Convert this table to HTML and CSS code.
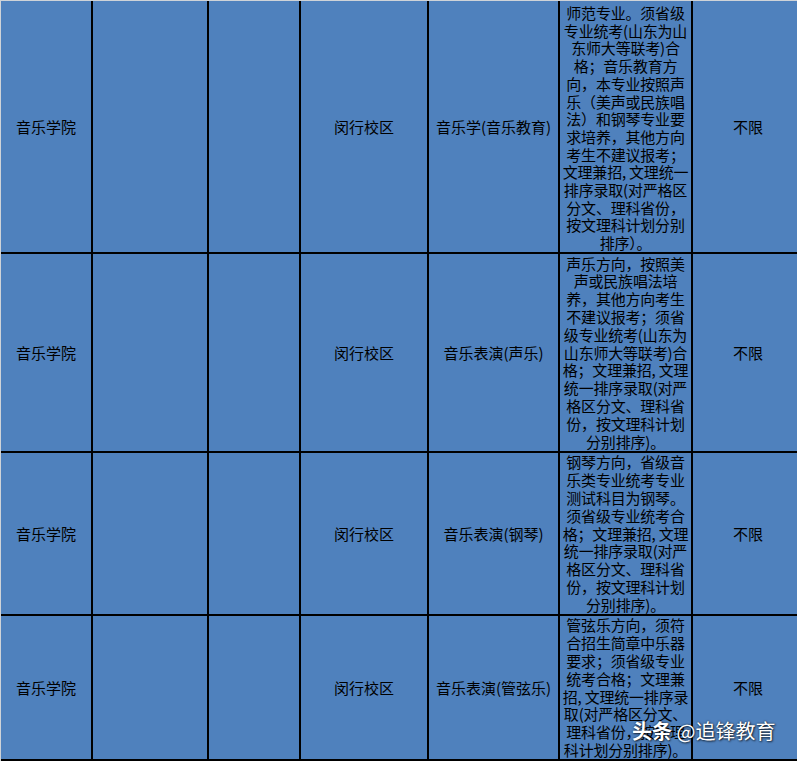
FILE: index.html
```html
<!DOCTYPE html>
<html lang="zh-CN">
<head>
<meta charset="utf-8">
<title>音乐学院招生计划</title>
<link rel="stylesheet" href="styles.css">
</head>
<body>
<div class="page">
  <div class="sheet">
    <div class="cell">音乐学院</div>
    <div class="cell"></div>
    <div class="cell"></div>
    <div class="cell">闵行校区</div>
    <div class="cell">音乐学(音乐教育)</div>
    <div class="cell note clipped">师范专业。须省级<br>专业统考(山东为山<br>东师大等联考)合<br>格；音乐教育方<br>向，本专业按照声<br>乐（美声或民族唱<br>法）和钢琴专业要<br>求培养，其他方向<br>考生不建议报考；<br>文理兼招, 文理统一<br>排序录取(对严格区<br>分文、理科省份，<br>按文理科计划分别<br>排序）。</div>
    <div class="cell">不限</div>

    <div class="cell">音乐学院</div>
    <div class="cell"></div>
    <div class="cell"></div>
    <div class="cell">闵行校区</div>
    <div class="cell">音乐表演(声乐)</div>
    <div class="cell note">声乐方向，按照美<br>声或民族唱法培<br>养，其他方向考生<br>不建议报考；须省<br>级专业统考(山东为<br>山东师大等联考)合<br>格；文理兼招, 文理<br>统一排序录取(对严<br>格区分文、理科省<br>份，按文理科计划<br>分别排序)。</div>
    <div class="cell">不限</div>

    <div class="cell">音乐学院</div>
    <div class="cell"></div>
    <div class="cell"></div>
    <div class="cell">闵行校区</div>
    <div class="cell">音乐表演(钢琴)</div>
    <div class="cell note">钢琴方向，省级音<br>乐类专业统考专业<br>测试科目为钢琴。<br>须省级专业统考合<br>格；文理兼招, 文理<br>统一排序录取(对严<br>格区分文、理科省<br>份，按文理科计划<br>分别排序)。</div>
    <div class="cell">不限</div>

    <div class="cell">音乐学院</div>
    <div class="cell"></div>
    <div class="cell"></div>
    <div class="cell">闵行校区</div>
    <div class="cell">音乐表演(管弦乐)</div>
    <div class="cell note">管弦乐方向，须符<br>合招生简章中乐器<br>要求；须省级专业<br>统考合格；文理兼<br>招, 文理统一排序录<br>取(对严格区分文、<br>理科省份，按文理<br>科计划分别排序)。</div>
    <div class="cell">不限</div>
  </div>
  <div class="watermark"><b>头条</b> @追锋教育</div>
</div>
</body>
</html>
```

FILE: styles.css
```css
html, body {
  margin: 0;
  padding: 0;
  background: #cfd3d8;
  overflow: hidden;
  height: 761px;
}

.page {
  position: relative;
  width: 797px;
  height: 761px;
  overflow: hidden;
}

.sheet {
  display: grid;
  grid-template-columns: 90px 114px 90px 126px 129px 131px 110px;
  grid-template-rows: 251px 197px 161px 143px;
  gap: 2px;
  background: #000;
  padding-bottom: 2px;
  margin: 1px 0 0 1px;
  width: max-content;
}

.cell {
  background: #4f81bd;
  color: #000;
  display: flex;
  align-items: center;
  justify-content: center;
  text-align: center;
  font-family: "Noto Sans CJK SC", "Noto Sans", sans-serif;
  font-size: 15px;
  line-height: 18px;
  overflow: hidden;
  white-space: nowrap;
}

.note {
  letter-spacing: -0.2px;
  line-height: 17.8px;
}

.clipped {
  align-items: flex-start;
  line-height: 17.7px;
  padding-top: 3px;
}

.watermark {
  position: absolute;
  left: 632px;
  top: 718px;
  color: #fff;
  font-family: "Noto Sans CJK SC", "Noto Sans", sans-serif;
  font-size: 20px;
  line-height: 26px;
  white-space: nowrap;
  text-shadow: 0 0 2px rgba(0, 0, 0, 0.75), 1px 1px 2px rgba(0, 0, 0, 0.6);
}

.watermark b {
  font-weight: 700;
}
```
